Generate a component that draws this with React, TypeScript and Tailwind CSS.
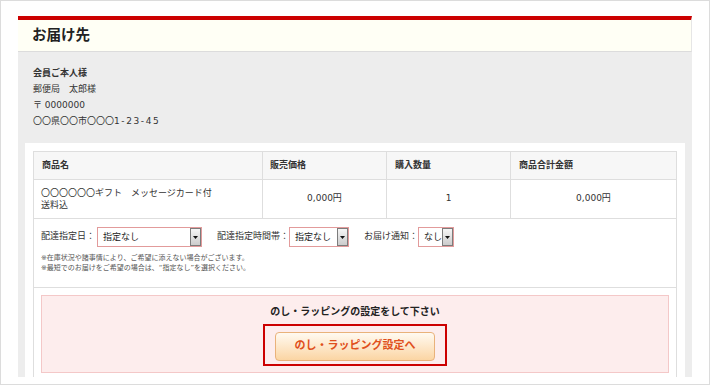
import React from 'react';

// Pseudo select box with the old-style grey arrow button
function FakeSelect({ value, width }: { value: string; width: string }) {
	return (
		<div className={`flex h-[20px] shrink-0 border border-[#e29b9b] bg-white ${width}`}>
			<span className="flex-1 whitespace-nowrap pl-[5px] text-[9px] leading-[18px] text-[#222]">{value}</span>
			<span className="flex w-[11px] items-center justify-center border border-[#7c7c7c] bg-linear-to-b from-[#f6f6f6] to-[#cccccc]">
				<svg width="5" height="3" viewBox="0 0 5 3">
					<path d="M0 0h5L2.5 3z" fill="#111" />
				</svg>
			</span>
		</div>
	);
}

export default function App() {
	return (
		<div className="h-[385px] w-[710px] border border-[#dcdcdc] bg-white font-[family-name:'DejaVu_Sans','Noto_Sans_CJK_JP',sans-serif] text-[#333]">
			{/* Panel, cut off at the bottom like the screenshot */}
			<div className="ml-[17px] mt-[15px] h-[361px] w-[674px] overflow-hidden">
				{/* Heading */}
				<div className="h-[36px] border-t-4 border-b border-r border-t-[#cc0000] border-b-[#dcdcdc] border-r-[#e6e6e6] bg-[#fffff5] pl-[14px]">
					<h1 className="text-[14.5px] font-bold leading-[31px] text-[#222]">お届け先</h1>
				</div>

				<div className="bg-[#ededed] px-[7px] pb-[8px] pt-[13px]">
					{/* Address */}
					<div className="mb-[14px] pl-[8px] text-[9px] leading-[16px] text-[#333]">
						<p className="font-bold">会員ご本人様</p>
						<p>郵便局　太郎様</p>
						<p>〒 0000000</p>
						<p>
							〇〇県〇〇市〇〇〇<span className="tracking-[1.6px]">1-23-45</span>
						</p>
					</div>

					{/* Order box */}
					<div className="bg-white p-[8px]">
						<div className="border border-[#dedede] text-[9px] text-[#333]">
							<div className="grid h-[28px] grid-cols-[229px_124px_124px_1fr] border-b border-[#dedede] bg-[#f7f7f7] font-bold">
								<div className="flex items-center border-r border-[#dedede] pl-[8px]">商品名</div>
								<div className="flex items-center border-r border-[#dedede] pl-[7px]">販売価格</div>
								<div className="flex items-center border-r border-[#dedede] pl-[8px]">購入数量</div>
								<div className="flex items-center pl-[8px]">商品合計金額</div>
							</div>
							<div className="grid h-[39px] grid-cols-[229px_124px_124px_1fr] border-b border-[#dedede]">
								<div className="flex flex-col justify-center border-r border-[#dedede] pl-[7px] leading-[12px]">
									<span>〇〇〇〇〇〇ギフト　メッセージカード付</span>
									<span>送料込</span>
								</div>
								<div className="flex items-center justify-center border-r border-[#dedede]">0,000円</div>
								<div className="flex items-center justify-center border-r border-[#dedede]">1</div>
								<div className="flex items-center justify-center">0,000円</div>
							</div>

							{/* Delivery options */}
							<div className="border-b border-[#dedede] px-[7px] pb-[14px] pt-[8px]">
								<div className="flex items-center gap-[15px]">
									<div className="flex items-center">
										<span className="mr-[2px] whitespace-nowrap">配達指定日：</span>
										<FakeSelect value="指定なし" width="w-[105px]" />
									</div>
									<div className="flex items-center">
										<span className="whitespace-nowrap">配達指定時間帯：</span>
										<FakeSelect value="指定なし" width="w-[60px]" />
									</div>
									<div className="flex items-center">
										<span className="whitespace-nowrap">お届け通知：</span>
										<FakeSelect value="なし" width="w-[36px]" />
									</div>
								</div>
								<div className="mt-[6px] text-[7px] leading-[10px] text-[#555]">
									<p>※在庫状況や諸事情により、ご希望に添えない場合がございます。</p>
									<p>※最短でのお届けをご希望の場合は、“指定なし”を選択ください。</p>
								</div>
							</div>

							{/* Noshi / wrapping */}
							<div className="p-[7px]">
								<div className="flex flex-col items-center border border-[#f4c8c8] bg-[#fdeded] pb-[6px] pt-[9px]">
									<p className="text-[10px] font-bold leading-[14px] text-[#222]">のし・ラッピングの設定をして下さい</p>
									<div className="mt-[5px] flex h-[42px] w-[184px] items-center justify-center border-2 border-[#cc0000] pt-[3px]">
										<button className="h-[29px] w-[160px] rounded-[4px] border border-[#e9b27a] bg-linear-to-b from-[#fffaf1] to-[#fbd5a3] text-[11px] font-bold text-[#e0501c]">
											のし・ラッピング設定へ
										</button>
									</div>
								</div>
							</div>
						</div>
					</div>
				</div>
			</div>
		</div>
	);
}
